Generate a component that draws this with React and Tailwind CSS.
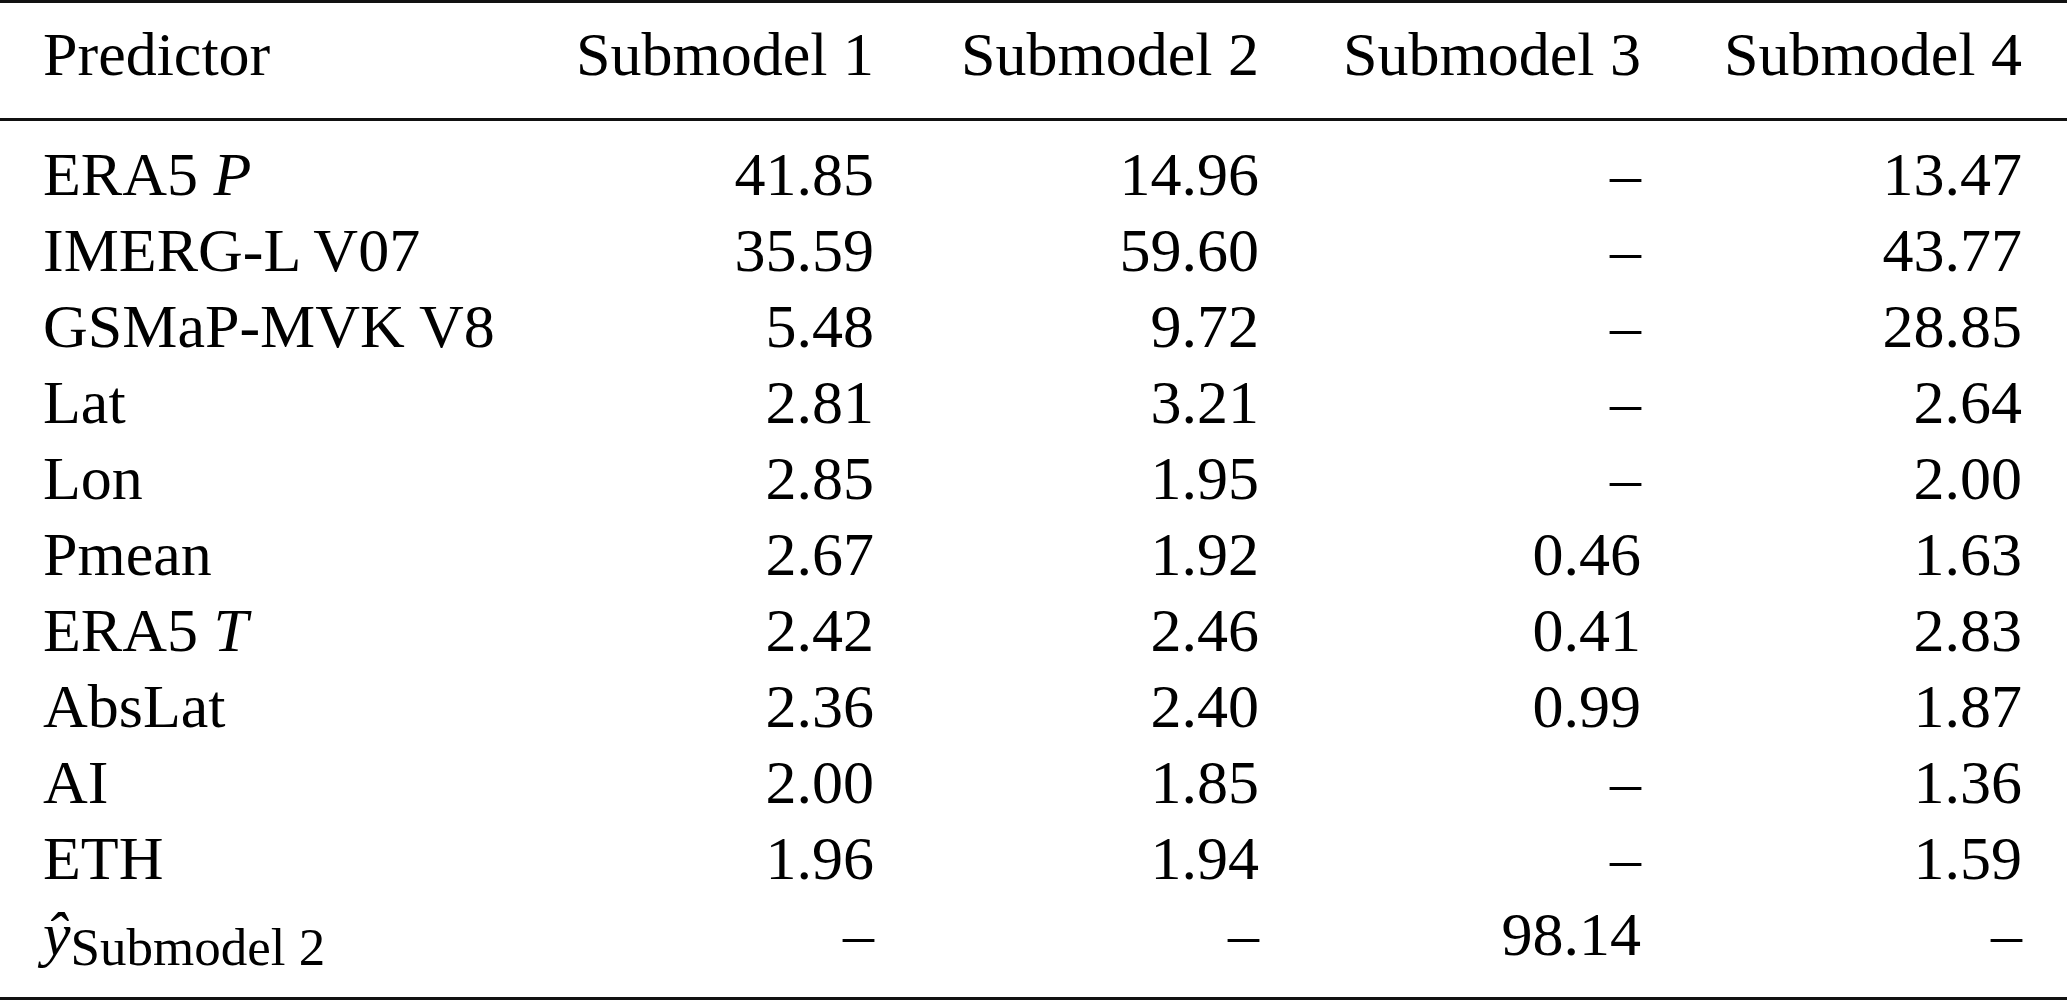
import React from "react";

const rows = [
  { label: <>ERA5 <i>P</i></>, values: ["41.85", "14.96", "–", "13.47"] },
  { label: "IMERG-L V07", values: ["35.59", "59.60", "–", "43.77"] },
  { label: "GSMaP-MVK V8", values: ["5.48", "9.72", "–", "28.85"] },
  { label: "Lat", values: ["2.81", "3.21", "–", "2.64"] },
  { label: "Lon", values: ["2.85", "1.95", "–", "2.00"] },
  { label: "Pmean", values: ["2.67", "1.92", "0.46", "1.63"] },
  { label: <>ERA5 <i>T</i></>, values: ["2.42", "2.46", "0.41", "2.83"] },
  { label: "AbsLat", values: ["2.36", "2.40", "0.99", "1.87"] },
  { label: "AI", values: ["2.00", "1.85", "–", "1.36"] },
  { label: "ETH", values: ["1.96", "1.94", "–", "1.59"] },
  {
    label: (
      <>
        <i>ŷ</i>
        <span className="relative top-[10px] text-[53px]">Submodel 2</span>
      </>
    ),
    values: ["–", "–", "98.14", "–"],
  },
];

// column right edges sit at 874 / 1259 / 1641 / 2022
const cols = "grid grid-cols-[517px_314px_385px_382px_381px] pl-[43px] pr-[45px] leading-[76px]";

export default function App() {
  return (
    <div className="w-[2067px] h-[1001px] bg-white text-black font-['Liberation_Serif','Times_New_Roman',serif] text-[62px]">
      <div className="border-t-[3px] border-b-[3px] border-[#111]">
        {/* Header */}
        <div className={`${cols} pt-[13px] pb-[26px] border-b-[3px] border-[#111]`}>
          <div>Predictor</div>
          <div className="text-right">Submodel 1</div>
          <div className="text-right">Submodel 2</div>
          <div className="text-right">Submodel 3</div>
          <div className="text-right">Submodel 4</div>
        </div>

        {/* Body */}
        <div className="pt-[15px] pb-[25px]">
          {rows.map((row, i) => (
            <div key={i} className={`${cols} h-[76px]`}>
              <div className="whitespace-nowrap">{row.label}</div>
              {row.values.map((v, j) => (
                <div key={j} className="text-right">{v}</div>
              ))}
            </div>
          ))}
        </div>
      </div>
    </div>
  );
}
